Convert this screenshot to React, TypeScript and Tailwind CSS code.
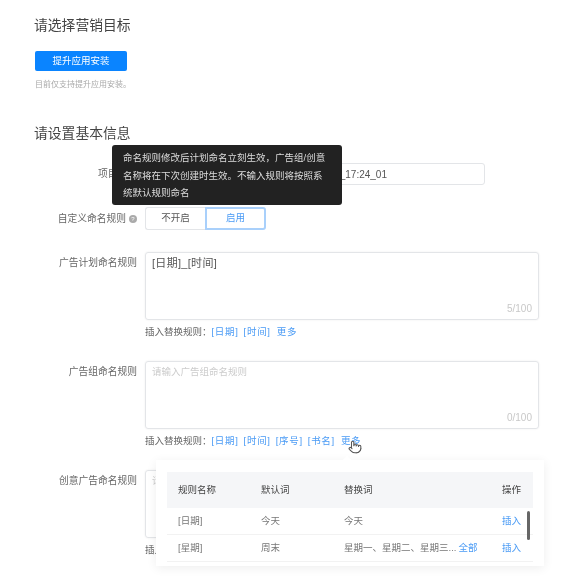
import React from "react";
import { Pointer } from "lucide-react";

const FONT = "[font-family:'Liberation_Sans','Noto_Sans_CJK_SC',sans-serif]";

function Label({ children }: { children: React.ReactNode }) {
  return <div className="w-[102px] mr-[8px] shrink-0 text-right text-[9.75px] leading-[22px] text-[#666]">{children}</div>;
}

function RuleLinks({ items }: { items: string[] }) {
  return (
    <div className="mt-[3px] flex h-[18px] items-center text-[9.5px] text-[#666]">
      <span>插入替换规则：</span>
      <span className="flex gap-[5px] tracking-[0.7px] text-[#4a9bf5]">
        {items.map((item) => (
          <span key={item}>{item}</span>
        ))}
        <span className="ml-[1px]">更多</span>
      </span>
    </div>
  );
}

function RuleArea({ label, value, placeholder, count, items }: { label: string; value?: string; placeholder?: string; count: string; items: string[] }) {
  return (
    <div className="flex">
      <Label>{label}</Label>
      <div className="w-[394px]">
        <div className="relative h-[68px] rounded-[3px] border border-[#e3e5e8] px-[6px] py-[3px] shadow-[0_0_2px_rgba(0,0,0,0.08)]">
          {value && <div className="text-[11px] leading-[14px] tracking-[0.3px] text-[#555]">{value}</div>}
          {placeholder && <div className="text-[9.5px] leading-[14px] text-[#ccc]">{placeholder}</div>}
          <div className="absolute right-[6px] bottom-[3px] text-[10px] text-[#c8c8c8]">{count}</div>
        </div>
        <RuleLinks items={items} />
      </div>
    </div>
  );
}

const rows = [
  { name: "[日期]", word: "今天", swap: "今天", all: false },
  { name: "[星期]", word: "周末", swap: "星期一、星期二、星期三...", all: true },
];

export default function App() {
  return (
    <div className={`relative h-[578px] w-[577px] overflow-hidden bg-white pl-[34px] blur-[0.4px] ${FONT}`}>
      <div className="pt-[17px] text-[13.8px] leading-[18px] text-[#444]">请选择营销目标</div>
      <button className="mt-[16px] ml-[1px] block h-[20px] w-[92px] rounded-[2px] bg-[#0a84ff] text-[9.5px] text-white">提升应用安装</button>
      <div className="mt-[9px] ml-[1px] text-[8px] leading-[10px] text-[#aaa]">目前仅支持提升应用安装。</div>
      <div className="mt-[35px] text-[13.8px] leading-[18px] text-[#444]">请设置基本信息</div>

      <div className="mt-[20px] ml-[1px]">
        <div className="flex">
          <Label>项目名称</Label>
          <div className="flex h-[22px] w-[340px] items-center justify-end rounded-[3px] border border-[#e3e5e8] pr-[97px] text-[10px] text-[#555]">0917_17:24_01</div>
        </div>

        <div className="mt-[22px] flex">
          <div className="mr-[8px] flex w-[102px] shrink-0 items-center justify-end gap-[3px] text-[9.75px] leading-[22px] text-[#666]">
            自定义命名规则
            <span className="flex h-[8px] w-[8px] items-center justify-center rounded-full bg-[#aaa] text-[6px] text-white">?</span>
          </div>
          <div className="flex h-[23px] text-[9.5px]">
            <div className="flex w-[60px] items-center justify-center rounded-l-[3px] border border-r-0 border-[#e3e5e8] text-[#555]">不开启</div>
            <div className="flex w-[61px] items-center justify-center rounded-r-[3px] border-2 border-[#a9d0fb] text-[#4a9bf5]">启用</div>
          </div>
        </div>

        <div className="mt-[22px] flex flex-col gap-[20px]">
          <RuleArea label="广告计划命名规则" value="[日期]_[时间]" count="5/100" items={["[日期]", "[时间]"]} />
          <RuleArea label="广告组命名规则" placeholder="请输入广告组命名规则" count="0/100" items={["[日期]", "[时间]", "[序号]", "[书名]"]} />
          <RuleArea label="创意广告命名规则" placeholder="请输入" count="0/100" items={["[日期]"]} />
        </div>
      </div>

      {/* tooltip */}
      <div className="absolute top-[145px] left-[112px] h-[60px] w-[230px] rounded-[3px] bg-[#222] px-[11px] py-[4px] text-[9.5px] leading-[17.5px] text-[#ddd]">
        命名规则修改后计划命名立刻生效，广告组/创意名称将在下次创建时生效。不输入规则将按照系统默认规则命名
      </div>

      {/* rule popover */}
      <div className="absolute top-[460px] left-[156px] h-[106px] w-[388px] bg-white px-[11px] pt-[12px] shadow-[0_2px_10px_rgba(0,0,0,0.07)]">
        <div className="absolute -top-[3px] left-[188px] h-[6px] w-[6px] rotate-45 bg-white" />
        <div className="flex h-[36px] items-center bg-[#f5f6f8] text-[9.5px] text-[#444]">
          <div className="w-[94px] pl-[11px]">规则名称</div>
          <div className="w-[83px]">默认词</div>
          <div className="w-[158px]">替换词</div>
          <div>操作</div>
        </div>
        {rows.map((row) => (
          <div key={row.name} className="flex h-[27px] items-center border-b border-[#f2f2f2] text-[9.5px] text-[#777]">
            <div className="w-[94px] pl-[11px]">{row.name}</div>
            <div className="w-[83px]">{row.word}</div>
            <div className="w-[158px]">
              {row.swap}
              {row.all && <span className="ml-[2px] text-[#4a9bf5]">全部</span>}
            </div>
            <div className="text-[#4a9bf5]">插入</div>
          </div>
        ))}
        <div className="absolute top-[51px] right-[14px] h-[29px] w-[3px] rounded-full bg-[#666]" />
      </div>

      {/* cursor */}
      <Pointer className="absolute top-[440px] left-[348px] h-[14px] w-[14px] fill-white text-[#555]" strokeWidth={1.8} />
    </div>
  );
}
